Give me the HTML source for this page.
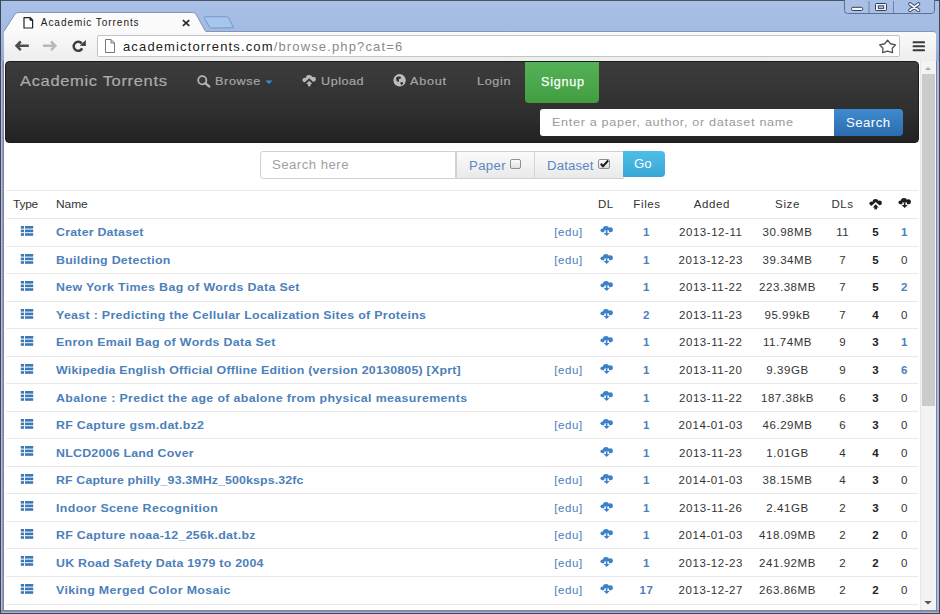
<!DOCTYPE html>
<html><head><meta charset="utf-8">
<style>
*{box-sizing:border-box;margin:0;padding:0}
html,body{width:940px;height:614px;overflow:hidden;font-family:"Liberation Sans",sans-serif;background:#fff}
.a{position:absolute}
.t{position:absolute;white-space:nowrap}
</style></head><body>

<div class="a" style="left:0;top:0;width:940px;height:614px;background:linear-gradient(#a9c1e7 0px,#a3bbe3 31px,#98aad6 61px,#8e9ac4 100%);"></div>
<div class="a" style="left:0;top:0;width:940px;height:1px;background:#4b5262"></div>
<div class="a" style="left:0;top:0;width:1px;height:614px;background:#3e4656"></div>
<div class="a" style="left:939px;top:0;width:1px;height:614px;background:#3e4656"></div>
<div class="a" style="left:0;top:613px;width:940px;height:1px;background:#3e4656"></div>
<svg class="a" style="left:840px;top:0" width="100" height="20">
<path d="M4.5 0 V10.5 Q4.5 13.5 7.5 13.5 H91.5 Q94.5 13.5 94.5 10.5 V0" fill="#a8bfe6" stroke="#5d6f93" stroke-width="1"/>
<line x1="29" y1="1" x2="29" y2="13" stroke="#6f82a8"/>
<line x1="53.5" y1="1" x2="53.5" y2="13" stroke="#6f82a8"/>
<rect x="11.5" y="7.3" width="11.2" height="3.2" rx="1.4" fill="#f6f8fc" stroke="#34405a" stroke-width="1"/>
<rect x="35.5" y="3.5" width="11" height="7" rx="0.8" fill="#eef2f8" stroke="#34405a" stroke-width="1"/>
<rect x="38.3" y="5.8" width="5.4" height="2.6" fill="#a8bfe6" stroke="#34405a" stroke-width="0.9"/>
<path d="M70 4 L78.5 10.2 M78.5 4 L70 10.2" stroke="#3a4660" stroke-width="3.6" stroke-linecap="round"/>
<path d="M70 4 L78.5 10.2 M78.5 4 L70 10.2" stroke="#f2f5fb" stroke-width="1.9" stroke-linecap="round"/>
</svg>
<div class="a" style="left:4px;top:31px;width:932px;height:30px;background:linear-gradient(#fafafa,#ededed);border-top:1px solid #8796b4;border-radius:0 3px 0 0"></div>
<svg class="a" style="left:0;top:0" width="260" height="40">
<path d="M233.5 27.8 L228.6 17.8 Q228 16.8 226.5 16.8 L205.5 16.8 Q203.6 16.8 204.4 18.2 L209.5 27 Q210.2 28 211.5 28 Z" fill="#a6c6f0" stroke="#7b94c2" stroke-width="1"/>
<path d="M3.5 32 L15 14 Q16.5 12.5 19 12.5 L192.5 12.5 Q194.8 12.5 196 14.2 L205.8 31.8" fill="#fbfbfb" stroke="#8494b3" stroke-width="1"/>
<rect x="4" y="31" width="201.5" height="3" fill="#f9f9f9"/>
<path d="M24 17.6 H30.2 L32.6 20 V28 H24 Z" fill="#fff" stroke="#222" stroke-width="1.2" stroke-linejoin="round"/><path d="M30 17.8 V20.2 H32.4" fill="#222" stroke="#222" stroke-width="1"/>
<path d="M182.9 20.2 L189.3 25.9 M189.3 20.2 L182.9 25.9" stroke="#2a2a2a" stroke-width="1.7"/>
</svg>
<div class="t" style="left:40.80px;top:18.14px;font-size:10px;line-height:10px;color:#1a1a1a;letter-spacing:0.950px;">Academic Torrents</div>
<svg class="a" style="left:0;top:30px" width="100" height="30">
<path d="M16.5 15.8 H28.8 M20.8 11.5 L16.5 15.8 L20.8 20.1" fill="none" stroke="#4e4e4e" stroke-width="2.5"/>
<path d="M43 15.8 H55.3 M51 11.5 L55.3 15.8 L51 20.1" fill="none" stroke="#b8b8b8" stroke-width="2.5"/>
<path d="M81.7 13.5 A4.5 4.5 0 1 0 82.2 18.4" fill="none" stroke="#3e3e3e" stroke-width="2.5"/>
<path d="M85.8 10 L85.8 16 L79.8 15.8 Z" fill="#3e3e3e"/>
</svg>
<div class="a" style="left:97px;top:35px;width:803px;height:22px;background:#fff;border:1px solid #c3c3c3;border-radius:2px"></div>
<svg class="a" style="left:100px;top:36px" width="20" height="20">
<path d="M5.5 3.5 H11 L14.5 7 V16.5 H5.5 Z M11 3.5 V7 H14.5" fill="#fff" stroke="#777" stroke-width="1"/>
</svg>
<div class="t" style="left:123.00px;top:40.30px;font-size:13px;line-height:13px;color:#222;letter-spacing:1.139px;">academictorrents.com<span style="color:#8a8a8a">/browse.php?cat=6</span></div>
<svg class="a" style="left:870px;top:33px" width="70" height="27">
<path d="M17.60 7.11 L20.48 10.75 L25.59 11.87 L22.26 15.24 L22.54 19.57 L17.60 18.02 L12.66 19.57 L12.94 15.24 L9.61 11.87 L14.72 10.75 Z" fill="#fff" stroke="#4e4e4e" stroke-width="1.3" stroke-linejoin="round"/>
<rect x="42.6" y="8.2" width="12.4" height="2.1" rx="0.9" fill="#3a3a3a"/>
<rect x="42.6" y="12.2" width="12.4" height="2.1" rx="0.9" fill="#3a3a3a"/>
<rect x="42.6" y="16.2" width="12.4" height="2.1" rx="0.9" fill="#3a3a3a"/>
</svg>
<div class="a" style="left:4px;top:61px;width:917px;height:549px;background:#fff"></div>
<div class="a" style="left:920px;top:61px;width:16px;height:549.5px;background:linear-gradient(90deg,#e6e6e6 0,#e6e6e6 1px,#f3f3f3 1px,#f3f3f3 14px,#f4f6ff 14px)"></div>
<div class="a" style="left:1px;top:61px;width:3px;height:552px;background:linear-gradient(90deg,#b3bbd9 0,#b3bbd9 1px,#949cc2 1px,#949cc2 2px,#7a82a8 2px)"></div>
<div class="a" style="left:936px;top:61px;width:3px;height:552px;background:linear-gradient(90deg,#7c83a5 0,#7c83a5 1px,#b0b8d8 1px)"></div>
<div class="a" style="left:1px;top:610px;width:938px;height:3px;background:linear-gradient(#80849f 0,#80849f 1px,#8a8fb0 1px,#8a8fb0 2px,#aab0d0 2px)"></div>
<div class="a" style="left:922px;top:74px;width:12.5px;height:332px;background:#cbcbcb"></div>
<svg class="a" style="left:921px;top:61px" width="14" height="549">
<path d="M4 9 L7 6 L10 9 Z" fill="#a8a8a8"/>
<path d="M3.3 540 L7 543.6 L10.7 540 Z" fill="#555"/>
</svg>
<div class="a" style="left:5px;top:60.5px;width:913.5px;height:82.2px;border-radius:4px;border:1px solid #1b1b1b;background:linear-gradient(#3c3c3c,#363636 30%,#2e2e2e 65%,#222222)"></div>
<div class="t" style="left:20.40px;top:73.10px;font-size:15px;line-height:15px;color:#ababab;letter-spacing:0.602px;transform:scaleX(1.1);transform-origin:0 0;-webkit-text-stroke:0.2px #ababab;">Academic Torrents</div>
<svg class="a" style="left:190px;top:68px" width="100" height="25">
<circle cx="12.3" cy="12.2" r="4.1" fill="none" stroke="#b4b4b4" stroke-width="1.8"/>
<path d="M15.2 15.1 L19.4 18.6" stroke="#b4b4b4" stroke-width="2.3" stroke-linecap="round"/>
<path d="M75.5 12.5 L82.5 12.5 L79 16 Z" fill="#3c8edb"/>
</svg>
<div class="t" style="left:214.50px;top:76.27px;font-size:11.5px;line-height:11.5px;color:#a6a6a6;letter-spacing:0.564px;transform:scaleX(1.1);transform-origin:0 0;-webkit-text-stroke:0.2px #a6a6a6;">Browse</div>
<svg class="a" style="left:302.00px;top:75.40px" width="16.2" height="13.0" viewBox="0 0 15 12"><g fill="#b8b8b8"><circle cx="2.5" cy="4.6" r="2.1"/><circle cx="6.5" cy="3.0" r="3.0"/><circle cx="10.6" cy="3.9" r="2.3"/><rect x="2.5" y="3.6" width="8" height="3.1"/></g><path d="M-1.5 10.6 L6.7 2.9 L14.9 10.6 Z" fill="#333"/><g fill="#b8b8b8"><path d="M3.7 8.4 L6.7 5.2 L9.7 8.4 Z"/><rect x="5.45" y="8" width="2.5" height="2.4"/></g></svg>
<div class="t" style="left:320.60px;top:76.27px;font-size:11.5px;line-height:11.5px;color:#a6a6a6;letter-spacing:0.455px;transform:scaleX(1.1);transform-origin:0 0;-webkit-text-stroke:0.2px #a6a6a6;">Upload</div>
<svg class="a" style="left:390px;top:72px" width="20" height="18">
<circle cx="9.6" cy="8.3" r="6.2" fill="#bcbcbc"/>
<path d="M6.2 5.6 Q7.6 4.2 9.8 4.6 Q11.8 5.2 10.9 6.6 Q9.2 6.6 8.8 7.8 Q9.6 9.4 8.2 10.1 Q6.6 9.6 6.3 8 Q6 6.6 6.2 5.6 Z" fill="#333"/>
<path d="M10.3 10.6 Q11.6 9.6 13.2 10.4 Q13.2 12 11.6 13 Q10.2 12.8 10.3 10.6 Z" fill="#333"/>
</svg>
<div class="t" style="left:410.20px;top:76.27px;font-size:11.5px;line-height:11.5px;color:#a6a6a6;letter-spacing:0.682px;transform:scaleX(1.1);transform-origin:0 0;-webkit-text-stroke:0.2px #a6a6a6;">About</div>
<div class="t" style="left:476.50px;top:76.27px;font-size:11.5px;line-height:11.5px;color:#a6a6a6;letter-spacing:0.568px;transform:scaleX(1.1);transform-origin:0 0;-webkit-text-stroke:0.2px #a6a6a6;">Login</div>
<div class="a" style="left:524.5px;top:61.5px;width:74.5px;height:41px;background:linear-gradient(#56b256,#419d41);border-radius:0 0 4px 4px"></div>
<div class="t" style="left:540.80px;top:76.24px;font-size:12px;line-height:12px;color:#f8fff8;letter-spacing:0.705px;transform:scaleX(1.05);transform-origin:0 0;-webkit-text-stroke:0.25px #f8fff8;">Signup</div>
<div class="a" style="left:540px;top:109px;width:294px;height:26.5px;background:#fff;border-radius:3px 0 0 3px"></div>
<div class="t" style="left:551.60px;top:117.27px;font-size:11.5px;line-height:11.5px;color:#9a9a9a;letter-spacing:0.600px;transform:scaleX(1.1);transform-origin:0 0;">Enter a paper, author, or dataset name</div>
<div class="a" style="left:833.5px;top:109px;width:69.5px;height:27px;background:linear-gradient(#3f8bd0,#2a6cae);border-radius:0 4px 4px 0"></div>
<div class="t" style="left:846.20px;top:116.84px;font-size:12px;line-height:12px;color:#fff;letter-spacing:0.418px;transform:scaleX(1.1);transform-origin:0 0;">Search</div>
<div class="a" style="left:259.5px;top:151px;width:196.5px;height:27.5px;background:#fff;border:1px solid #d2d2d2;border-radius:3px 0 0 3px"></div>
<div class="t" style="left:272.30px;top:159.34px;font-size:12px;line-height:12px;color:#a0a0a0;letter-spacing:0.418px;transform:scaleX(1.1);transform-origin:0 0;">Search here</div>
<div class="a" style="left:455.5px;top:151px;width:168px;height:28px;background:linear-gradient(#fbfbfb,#e9e9e9);border:1px solid #d0d0d0;border-right:none"></div>
<div class="a" style="left:534px;top:151px;width:1px;height:28px;background:#d4d4d4"></div>
<div class="t" style="left:468.70px;top:159.84px;font-size:12px;line-height:12px;color:#5a87c0;letter-spacing:0.318px;transform:scaleX(1.1);transform-origin:0 0;">Paper</div>
<div class="a" style="left:509.7px;top:159.3px;width:11px;height:9.8px;background:linear-gradient(#fcfcfc,#dedede);border:1px solid #8f8f8f;border-radius:2px"></div>
<div class="t" style="left:547.20px;top:159.84px;font-size:12px;line-height:12px;color:#5a87c0;letter-spacing:0.136px;transform:scaleX(1.1);transform-origin:0 0;">Dataset</div>
<div class="a" style="left:598.3px;top:159.3px;width:11.5px;height:9.8px;background:linear-gradient(#fcfcfc,#dedede);border:1px solid #8f8f8f;border-radius:2px"></div>
<svg class="a" style="left:598px;top:157px" width="13" height="13"><path d="M2.8 6.8 L5 9.2 L10.2 3.5" fill="none" stroke="#1e1e1e" stroke-width="2"/></svg>
<div class="a" style="left:623px;top:151px;width:42px;height:26px;background:linear-gradient(#4fbde6,#37a8d6);border-radius:0 4px 4px 0"></div>
<div class="t" style="left:633.80px;top:158.44px;font-size:12px;line-height:12px;color:#fff;letter-spacing:-0.091px;transform:scaleX(1.1);transform-origin:0 0;">Go</div>
<div class="a" style="left:6px;top:190px;width:912px;height:1px;background:#e8e8e8"></div>
<div class="t" style="left:13.30px;top:199.27px;font-size:11.5px;line-height:11.5px;color:#333;letter-spacing:-0.224px;transform:scaleX(1.04);transform-origin:0 0;">Type</div>
<div class="t" style="left:56.40px;top:199.27px;font-size:11.5px;line-height:11.5px;color:#333;letter-spacing:-0.064px;transform:scaleX(1.04);transform-origin:0 0;">Name</div>
<div class="t" style="left:565.90px;width:80px;text-align:center;top:199.27px;font-size:11.5px;line-height:11.5px;color:#333;letter-spacing:0.600px;">DL</div>
<div class="t" style="left:607.00px;width:80px;text-align:center;top:199.27px;font-size:11.5px;line-height:11.5px;color:#333;letter-spacing:0.600px;">Files</div>
<div class="t" style="left:671.80px;width:80px;text-align:center;top:199.27px;font-size:11.5px;line-height:11.5px;color:#333;letter-spacing:0.600px;">Added</div>
<div class="t" style="left:747.50px;width:80px;text-align:center;top:199.27px;font-size:11.5px;line-height:11.5px;color:#333;letter-spacing:0.600px;">Size</div>
<div class="t" style="left:802.60px;width:80px;text-align:center;top:199.27px;font-size:11.5px;line-height:11.5px;color:#333;letter-spacing:0.600px;">DLs</div>
<svg class="a" style="left:869.00px;top:198.60px" width="15.0" height="12.0" viewBox="0 0 15 12"><g fill="#1e1e1e"><circle cx="2.5" cy="4.6" r="2.1"/><circle cx="6.5" cy="3.0" r="3.0"/><circle cx="10.6" cy="3.9" r="2.3"/><rect x="2.5" y="3.6" width="8" height="3.1"/></g><path d="M-1.5 10.6 L6.7 2.9 L14.9 10.6 Z" fill="#fff"/><g fill="#1e1e1e"><path d="M3.7 8.4 L6.7 5.2 L9.7 8.4 Z"/><rect x="5.45" y="8" width="2.5" height="2.4"/></g></svg>
<svg class="a" style="left:897.60px;top:198.30px" width="15.0" height="12.0" viewBox="0 0 15 12"><g fill="#1e1e1e"><circle cx="2.4" cy="4.3" r="1.9"/><circle cx="6.0" cy="3.1" r="3.1"/><circle cx="10.4" cy="3.7" r="2.5"/><rect x="2.4" y="3.7" width="8" height="2.5"/></g><rect x="4.3" y="4.5" width="4.7" height="2.6" fill="#fff"/><g fill="#1e1e1e"><rect x="5.85" y="4.5" width="1.6" height="2.8"/><path d="M3.7 6.9 L9.6 6.9 L6.65 10.1 Z"/></g></svg>
<div class="a" style="left:6px;top:218.00px;width:912px;height:1px;background:#e8e8e8"></div>
<div class="a" style="left:6px;top:245.54px;width:912px;height:1px;background:#e8e8e8"></div>
<div class="a" style="left:6px;top:273.08px;width:912px;height:1px;background:#e8e8e8"></div>
<div class="a" style="left:6px;top:300.62px;width:912px;height:1px;background:#e8e8e8"></div>
<div class="a" style="left:6px;top:328.16px;width:912px;height:1px;background:#e8e8e8"></div>
<div class="a" style="left:6px;top:355.70px;width:912px;height:1px;background:#e8e8e8"></div>
<div class="a" style="left:6px;top:383.24px;width:912px;height:1px;background:#e8e8e8"></div>
<div class="a" style="left:6px;top:410.78px;width:912px;height:1px;background:#e8e8e8"></div>
<div class="a" style="left:6px;top:438.32px;width:912px;height:1px;background:#e8e8e8"></div>
<div class="a" style="left:6px;top:465.86px;width:912px;height:1px;background:#e8e8e8"></div>
<div class="a" style="left:6px;top:493.40px;width:912px;height:1px;background:#e8e8e8"></div>
<div class="a" style="left:6px;top:520.94px;width:912px;height:1px;background:#e8e8e8"></div>
<div class="a" style="left:6px;top:548.48px;width:912px;height:1px;background:#e8e8e8"></div>
<div class="a" style="left:6px;top:576.02px;width:912px;height:1px;background:#e8e8e8"></div>
<div class="a" style="left:6px;top:603.56px;width:912px;height:1px;background:#e8e8e8"></div>
<svg class="a" style="left:20px;top:226.00px" width="14" height="11">
<rect x="0.8" y="0" width="3.2" height="2.6" fill="#3a78b6"/><rect x="5" y="0" width="8.2" height="2.6" fill="#3a78b6"/>
<rect x="0.8" y="3.6" width="3.2" height="2.6" fill="#3a78b6"/><rect x="5" y="3.6" width="8.2" height="2.6" fill="#3a78b6"/>
<rect x="0.8" y="7.2" width="3.2" height="2.6" fill="#3a78b6"/><rect x="5" y="7.2" width="8.2" height="2.6" fill="#3a78b6"/>
</svg>
<div class="t" style="left:56.20px;top:227.27px;font-size:11.5px;line-height:11.5px;color:#4c80ba;letter-spacing:0.207px;font-weight:bold;transform:scaleX(1.076);transform-origin:0 0;">Crater Dataset</div>
<div class="t" style="left:538.50px;width:60px;text-align:center;top:227.27px;font-size:11.5px;line-height:11.5px;color:#4c80ba;letter-spacing:0.600px;">[edu]</div>
<svg class="a" style="left:600.00px;top:226.20px" width="15.0" height="12.0" viewBox="0 0 15 12"><g fill="#3d82c8"><circle cx="2.4" cy="4.3" r="1.9"/><circle cx="6.0" cy="3.1" r="3.1"/><circle cx="10.4" cy="3.7" r="2.5"/><rect x="2.4" y="3.7" width="8" height="2.5"/></g><rect x="4.3" y="4.5" width="4.7" height="2.6" fill="#fff"/><g fill="#3d82c8"><rect x="5.85" y="4.5" width="1.6" height="2.8"/><path d="M3.7 6.9 L9.6 6.9 L6.65 10.1 Z"/></g></svg>
<div class="t" style="left:626.60px;width:40px;text-align:center;top:227.27px;font-size:11.5px;line-height:11.5px;color:#4c80ba;letter-spacing:0.600px;font-weight:bold;">1</div>
<div class="t" style="left:665.77px;width:90px;text-align:center;top:227.27px;font-size:11.5px;line-height:11.5px;color:#333;letter-spacing:0.550px;">2013-12-11</div>
<div class="t" style="left:742.48px;width:90px;text-align:center;top:227.27px;font-size:11.5px;line-height:11.5px;color:#333;letter-spacing:0.550px;">30.98MB</div>
<div class="t" style="left:822.77px;width:40px;text-align:center;top:227.27px;font-size:11.5px;line-height:11.5px;color:#333;letter-spacing:0.550px;">11</div>
<div class="t" style="left:860.75px;width:30px;text-align:center;top:227.27px;font-size:11.5px;line-height:11.5px;color:#222;letter-spacing:0.500px;font-weight:bold;">5</div>
<div class="t" style="left:889.55px;width:30px;text-align:center;top:227.27px;font-size:11.5px;line-height:11.5px;color:#4c80ba;letter-spacing:0.500px;font-weight:bold;">1</div>
<svg class="a" style="left:20px;top:254.00px" width="14" height="11">
<rect x="0.8" y="0" width="3.2" height="2.6" fill="#3a78b6"/><rect x="5" y="0" width="8.2" height="2.6" fill="#3a78b6"/>
<rect x="0.8" y="3.6" width="3.2" height="2.6" fill="#3a78b6"/><rect x="5" y="3.6" width="8.2" height="2.6" fill="#3a78b6"/>
<rect x="0.8" y="7.2" width="3.2" height="2.6" fill="#3a78b6"/><rect x="5" y="7.2" width="8.2" height="2.6" fill="#3a78b6"/>
</svg>
<div class="t" style="left:56.20px;top:254.81px;font-size:11.5px;line-height:11.5px;color:#4c80ba;letter-spacing:0.280px;font-weight:bold;transform:scaleX(1.076);transform-origin:0 0;">Building Detection</div>
<div class="t" style="left:538.50px;width:60px;text-align:center;top:254.81px;font-size:11.5px;line-height:11.5px;color:#4c80ba;letter-spacing:0.600px;">[edu]</div>
<svg class="a" style="left:600.00px;top:253.74px" width="15.0" height="12.0" viewBox="0 0 15 12"><g fill="#3d82c8"><circle cx="2.4" cy="4.3" r="1.9"/><circle cx="6.0" cy="3.1" r="3.1"/><circle cx="10.4" cy="3.7" r="2.5"/><rect x="2.4" y="3.7" width="8" height="2.5"/></g><rect x="4.3" y="4.5" width="4.7" height="2.6" fill="#fff"/><g fill="#3d82c8"><rect x="5.85" y="4.5" width="1.6" height="2.8"/><path d="M3.7 6.9 L9.6 6.9 L6.65 10.1 Z"/></g></svg>
<div class="t" style="left:626.60px;width:40px;text-align:center;top:254.81px;font-size:11.5px;line-height:11.5px;color:#4c80ba;letter-spacing:0.600px;font-weight:bold;">1</div>
<div class="t" style="left:665.77px;width:90px;text-align:center;top:254.81px;font-size:11.5px;line-height:11.5px;color:#333;letter-spacing:0.550px;">2013-12-23</div>
<div class="t" style="left:742.48px;width:90px;text-align:center;top:254.81px;font-size:11.5px;line-height:11.5px;color:#333;letter-spacing:0.550px;">39.34MB</div>
<div class="t" style="left:822.77px;width:40px;text-align:center;top:254.81px;font-size:11.5px;line-height:11.5px;color:#333;letter-spacing:0.550px;">7</div>
<div class="t" style="left:860.75px;width:30px;text-align:center;top:254.81px;font-size:11.5px;line-height:11.5px;color:#222;letter-spacing:0.500px;font-weight:bold;">5</div>
<div class="t" style="left:889.55px;width:30px;text-align:center;top:254.81px;font-size:11.5px;line-height:11.5px;color:#333;letter-spacing:0.500px;">0</div>
<svg class="a" style="left:20px;top:281.00px" width="14" height="11">
<rect x="0.8" y="0" width="3.2" height="2.6" fill="#3a78b6"/><rect x="5" y="0" width="8.2" height="2.6" fill="#3a78b6"/>
<rect x="0.8" y="3.6" width="3.2" height="2.6" fill="#3a78b6"/><rect x="5" y="3.6" width="8.2" height="2.6" fill="#3a78b6"/>
<rect x="0.8" y="7.2" width="3.2" height="2.6" fill="#3a78b6"/><rect x="5" y="7.2" width="8.2" height="2.6" fill="#3a78b6"/>
</svg>
<div class="t" style="left:56.20px;top:282.35px;font-size:11.5px;line-height:11.5px;color:#4c80ba;letter-spacing:0.336px;font-weight:bold;transform:scaleX(1.076);transform-origin:0 0;">New York Times Bag of Words Data Set</div>
<svg class="a" style="left:600.00px;top:281.28px" width="15.0" height="12.0" viewBox="0 0 15 12"><g fill="#3d82c8"><circle cx="2.4" cy="4.3" r="1.9"/><circle cx="6.0" cy="3.1" r="3.1"/><circle cx="10.4" cy="3.7" r="2.5"/><rect x="2.4" y="3.7" width="8" height="2.5"/></g><rect x="4.3" y="4.5" width="4.7" height="2.6" fill="#fff"/><g fill="#3d82c8"><rect x="5.85" y="4.5" width="1.6" height="2.8"/><path d="M3.7 6.9 L9.6 6.9 L6.65 10.1 Z"/></g></svg>
<div class="t" style="left:626.60px;width:40px;text-align:center;top:282.35px;font-size:11.5px;line-height:11.5px;color:#4c80ba;letter-spacing:0.600px;font-weight:bold;">1</div>
<div class="t" style="left:665.77px;width:90px;text-align:center;top:282.35px;font-size:11.5px;line-height:11.5px;color:#333;letter-spacing:0.550px;">2013-11-22</div>
<div class="t" style="left:742.48px;width:90px;text-align:center;top:282.35px;font-size:11.5px;line-height:11.5px;color:#333;letter-spacing:0.550px;">223.38MB</div>
<div class="t" style="left:822.77px;width:40px;text-align:center;top:282.35px;font-size:11.5px;line-height:11.5px;color:#333;letter-spacing:0.550px;">7</div>
<div class="t" style="left:860.75px;width:30px;text-align:center;top:282.35px;font-size:11.5px;line-height:11.5px;color:#222;letter-spacing:0.500px;font-weight:bold;">5</div>
<div class="t" style="left:889.55px;width:30px;text-align:center;top:282.35px;font-size:11.5px;line-height:11.5px;color:#4c80ba;letter-spacing:0.500px;font-weight:bold;">2</div>
<svg class="a" style="left:20px;top:309.00px" width="14" height="11">
<rect x="0.8" y="0" width="3.2" height="2.6" fill="#3a78b6"/><rect x="5" y="0" width="8.2" height="2.6" fill="#3a78b6"/>
<rect x="0.8" y="3.6" width="3.2" height="2.6" fill="#3a78b6"/><rect x="5" y="3.6" width="8.2" height="2.6" fill="#3a78b6"/>
<rect x="0.8" y="7.2" width="3.2" height="2.6" fill="#3a78b6"/><rect x="5" y="7.2" width="8.2" height="2.6" fill="#3a78b6"/>
</svg>
<div class="t" style="left:56.20px;top:309.89px;font-size:11.5px;line-height:11.5px;color:#4c80ba;letter-spacing:0.294px;font-weight:bold;transform:scaleX(1.076);transform-origin:0 0;">Yeast : Predicting the Cellular Localization Sites of Proteins</div>
<svg class="a" style="left:600.00px;top:308.82px" width="15.0" height="12.0" viewBox="0 0 15 12"><g fill="#3d82c8"><circle cx="2.4" cy="4.3" r="1.9"/><circle cx="6.0" cy="3.1" r="3.1"/><circle cx="10.4" cy="3.7" r="2.5"/><rect x="2.4" y="3.7" width="8" height="2.5"/></g><rect x="4.3" y="4.5" width="4.7" height="2.6" fill="#fff"/><g fill="#3d82c8"><rect x="5.85" y="4.5" width="1.6" height="2.8"/><path d="M3.7 6.9 L9.6 6.9 L6.65 10.1 Z"/></g></svg>
<div class="t" style="left:626.60px;width:40px;text-align:center;top:309.89px;font-size:11.5px;line-height:11.5px;color:#4c80ba;letter-spacing:0.600px;font-weight:bold;">2</div>
<div class="t" style="left:665.77px;width:90px;text-align:center;top:309.89px;font-size:11.5px;line-height:11.5px;color:#333;letter-spacing:0.550px;">2013-11-23</div>
<div class="t" style="left:742.48px;width:90px;text-align:center;top:309.89px;font-size:11.5px;line-height:11.5px;color:#333;letter-spacing:0.550px;">95.99kB</div>
<div class="t" style="left:822.77px;width:40px;text-align:center;top:309.89px;font-size:11.5px;line-height:11.5px;color:#333;letter-spacing:0.550px;">7</div>
<div class="t" style="left:860.75px;width:30px;text-align:center;top:309.89px;font-size:11.5px;line-height:11.5px;color:#222;letter-spacing:0.500px;font-weight:bold;">4</div>
<div class="t" style="left:889.55px;width:30px;text-align:center;top:309.89px;font-size:11.5px;line-height:11.5px;color:#333;letter-spacing:0.500px;">0</div>
<svg class="a" style="left:20px;top:336.00px" width="14" height="11">
<rect x="0.8" y="0" width="3.2" height="2.6" fill="#3a78b6"/><rect x="5" y="0" width="8.2" height="2.6" fill="#3a78b6"/>
<rect x="0.8" y="3.6" width="3.2" height="2.6" fill="#3a78b6"/><rect x="5" y="3.6" width="8.2" height="2.6" fill="#3a78b6"/>
<rect x="0.8" y="7.2" width="3.2" height="2.6" fill="#3a78b6"/><rect x="5" y="7.2" width="8.2" height="2.6" fill="#3a78b6"/>
</svg>
<div class="t" style="left:56.20px;top:337.43px;font-size:11.5px;line-height:11.5px;color:#4c80ba;letter-spacing:0.307px;font-weight:bold;transform:scaleX(1.076);transform-origin:0 0;">Enron Email Bag of Words Data Set</div>
<svg class="a" style="left:600.00px;top:336.36px" width="15.0" height="12.0" viewBox="0 0 15 12"><g fill="#3d82c8"><circle cx="2.4" cy="4.3" r="1.9"/><circle cx="6.0" cy="3.1" r="3.1"/><circle cx="10.4" cy="3.7" r="2.5"/><rect x="2.4" y="3.7" width="8" height="2.5"/></g><rect x="4.3" y="4.5" width="4.7" height="2.6" fill="#fff"/><g fill="#3d82c8"><rect x="5.85" y="4.5" width="1.6" height="2.8"/><path d="M3.7 6.9 L9.6 6.9 L6.65 10.1 Z"/></g></svg>
<div class="t" style="left:626.60px;width:40px;text-align:center;top:337.43px;font-size:11.5px;line-height:11.5px;color:#4c80ba;letter-spacing:0.600px;font-weight:bold;">1</div>
<div class="t" style="left:665.77px;width:90px;text-align:center;top:337.43px;font-size:11.5px;line-height:11.5px;color:#333;letter-spacing:0.550px;">2013-11-22</div>
<div class="t" style="left:742.48px;width:90px;text-align:center;top:337.43px;font-size:11.5px;line-height:11.5px;color:#333;letter-spacing:0.550px;">11.74MB</div>
<div class="t" style="left:822.77px;width:40px;text-align:center;top:337.43px;font-size:11.5px;line-height:11.5px;color:#333;letter-spacing:0.550px;">9</div>
<div class="t" style="left:860.75px;width:30px;text-align:center;top:337.43px;font-size:11.5px;line-height:11.5px;color:#222;letter-spacing:0.500px;font-weight:bold;">3</div>
<div class="t" style="left:889.55px;width:30px;text-align:center;top:337.43px;font-size:11.5px;line-height:11.5px;color:#4c80ba;letter-spacing:0.500px;font-weight:bold;">1</div>
<svg class="a" style="left:20px;top:364.00px" width="14" height="11">
<rect x="0.8" y="0" width="3.2" height="2.6" fill="#3a78b6"/><rect x="5" y="0" width="8.2" height="2.6" fill="#3a78b6"/>
<rect x="0.8" y="3.6" width="3.2" height="2.6" fill="#3a78b6"/><rect x="5" y="3.6" width="8.2" height="2.6" fill="#3a78b6"/>
<rect x="0.8" y="7.2" width="3.2" height="2.6" fill="#3a78b6"/><rect x="5" y="7.2" width="8.2" height="2.6" fill="#3a78b6"/>
</svg>
<div class="t" style="left:56.20px;top:364.97px;font-size:11.5px;line-height:11.5px;color:#4c80ba;letter-spacing:0.207px;font-weight:bold;transform:scaleX(1.076);transform-origin:0 0;">Wikipedia English Official Offline Edition (version 20130805) [Xprt]</div>
<div class="t" style="left:538.50px;width:60px;text-align:center;top:364.97px;font-size:11.5px;line-height:11.5px;color:#4c80ba;letter-spacing:0.600px;">[edu]</div>
<svg class="a" style="left:600.00px;top:363.90px" width="15.0" height="12.0" viewBox="0 0 15 12"><g fill="#3d82c8"><circle cx="2.4" cy="4.3" r="1.9"/><circle cx="6.0" cy="3.1" r="3.1"/><circle cx="10.4" cy="3.7" r="2.5"/><rect x="2.4" y="3.7" width="8" height="2.5"/></g><rect x="4.3" y="4.5" width="4.7" height="2.6" fill="#fff"/><g fill="#3d82c8"><rect x="5.85" y="4.5" width="1.6" height="2.8"/><path d="M3.7 6.9 L9.6 6.9 L6.65 10.1 Z"/></g></svg>
<div class="t" style="left:626.60px;width:40px;text-align:center;top:364.97px;font-size:11.5px;line-height:11.5px;color:#4c80ba;letter-spacing:0.600px;font-weight:bold;">1</div>
<div class="t" style="left:665.77px;width:90px;text-align:center;top:364.97px;font-size:11.5px;line-height:11.5px;color:#333;letter-spacing:0.550px;">2013-11-20</div>
<div class="t" style="left:742.48px;width:90px;text-align:center;top:364.97px;font-size:11.5px;line-height:11.5px;color:#333;letter-spacing:0.550px;">9.39GB</div>
<div class="t" style="left:822.77px;width:40px;text-align:center;top:364.97px;font-size:11.5px;line-height:11.5px;color:#333;letter-spacing:0.550px;">9</div>
<div class="t" style="left:860.75px;width:30px;text-align:center;top:364.97px;font-size:11.5px;line-height:11.5px;color:#222;letter-spacing:0.500px;font-weight:bold;">3</div>
<div class="t" style="left:889.55px;width:30px;text-align:center;top:364.97px;font-size:11.5px;line-height:11.5px;color:#4c80ba;letter-spacing:0.500px;font-weight:bold;">6</div>
<svg class="a" style="left:20px;top:391.00px" width="14" height="11">
<rect x="0.8" y="0" width="3.2" height="2.6" fill="#3a78b6"/><rect x="5" y="0" width="8.2" height="2.6" fill="#3a78b6"/>
<rect x="0.8" y="3.6" width="3.2" height="2.6" fill="#3a78b6"/><rect x="5" y="3.6" width="8.2" height="2.6" fill="#3a78b6"/>
<rect x="0.8" y="7.2" width="3.2" height="2.6" fill="#3a78b6"/><rect x="5" y="7.2" width="8.2" height="2.6" fill="#3a78b6"/>
</svg>
<div class="t" style="left:56.20px;top:392.51px;font-size:11.5px;line-height:11.5px;color:#4c80ba;letter-spacing:0.338px;font-weight:bold;transform:scaleX(1.076);transform-origin:0 0;">Abalone : Predict the age of abalone from physical measurements</div>
<svg class="a" style="left:600.00px;top:391.44px" width="15.0" height="12.0" viewBox="0 0 15 12"><g fill="#3d82c8"><circle cx="2.4" cy="4.3" r="1.9"/><circle cx="6.0" cy="3.1" r="3.1"/><circle cx="10.4" cy="3.7" r="2.5"/><rect x="2.4" y="3.7" width="8" height="2.5"/></g><rect x="4.3" y="4.5" width="4.7" height="2.6" fill="#fff"/><g fill="#3d82c8"><rect x="5.85" y="4.5" width="1.6" height="2.8"/><path d="M3.7 6.9 L9.6 6.9 L6.65 10.1 Z"/></g></svg>
<div class="t" style="left:626.60px;width:40px;text-align:center;top:392.51px;font-size:11.5px;line-height:11.5px;color:#4c80ba;letter-spacing:0.600px;font-weight:bold;">1</div>
<div class="t" style="left:665.77px;width:90px;text-align:center;top:392.51px;font-size:11.5px;line-height:11.5px;color:#333;letter-spacing:0.550px;">2013-11-22</div>
<div class="t" style="left:742.48px;width:90px;text-align:center;top:392.51px;font-size:11.5px;line-height:11.5px;color:#333;letter-spacing:0.550px;">187.38kB</div>
<div class="t" style="left:822.77px;width:40px;text-align:center;top:392.51px;font-size:11.5px;line-height:11.5px;color:#333;letter-spacing:0.550px;">6</div>
<div class="t" style="left:860.75px;width:30px;text-align:center;top:392.51px;font-size:11.5px;line-height:11.5px;color:#222;letter-spacing:0.500px;font-weight:bold;">3</div>
<div class="t" style="left:889.55px;width:30px;text-align:center;top:392.51px;font-size:11.5px;line-height:11.5px;color:#333;letter-spacing:0.500px;">0</div>
<svg class="a" style="left:20px;top:419.00px" width="14" height="11">
<rect x="0.8" y="0" width="3.2" height="2.6" fill="#3a78b6"/><rect x="5" y="0" width="8.2" height="2.6" fill="#3a78b6"/>
<rect x="0.8" y="3.6" width="3.2" height="2.6" fill="#3a78b6"/><rect x="5" y="3.6" width="8.2" height="2.6" fill="#3a78b6"/>
<rect x="0.8" y="7.2" width="3.2" height="2.6" fill="#3a78b6"/><rect x="5" y="7.2" width="8.2" height="2.6" fill="#3a78b6"/>
</svg>
<div class="t" style="left:56.20px;top:420.05px;font-size:11.5px;line-height:11.5px;color:#4c80ba;letter-spacing:0.282px;font-weight:bold;transform:scaleX(1.076);transform-origin:0 0;">RF Capture gsm.dat.bz2</div>
<div class="t" style="left:538.50px;width:60px;text-align:center;top:420.05px;font-size:11.5px;line-height:11.5px;color:#4c80ba;letter-spacing:0.600px;">[edu]</div>
<svg class="a" style="left:600.00px;top:418.98px" width="15.0" height="12.0" viewBox="0 0 15 12"><g fill="#3d82c8"><circle cx="2.4" cy="4.3" r="1.9"/><circle cx="6.0" cy="3.1" r="3.1"/><circle cx="10.4" cy="3.7" r="2.5"/><rect x="2.4" y="3.7" width="8" height="2.5"/></g><rect x="4.3" y="4.5" width="4.7" height="2.6" fill="#fff"/><g fill="#3d82c8"><rect x="5.85" y="4.5" width="1.6" height="2.8"/><path d="M3.7 6.9 L9.6 6.9 L6.65 10.1 Z"/></g></svg>
<div class="t" style="left:626.60px;width:40px;text-align:center;top:420.05px;font-size:11.5px;line-height:11.5px;color:#4c80ba;letter-spacing:0.600px;font-weight:bold;">1</div>
<div class="t" style="left:665.77px;width:90px;text-align:center;top:420.05px;font-size:11.5px;line-height:11.5px;color:#333;letter-spacing:0.550px;">2014-01-03</div>
<div class="t" style="left:742.48px;width:90px;text-align:center;top:420.05px;font-size:11.5px;line-height:11.5px;color:#333;letter-spacing:0.550px;">46.29MB</div>
<div class="t" style="left:822.77px;width:40px;text-align:center;top:420.05px;font-size:11.5px;line-height:11.5px;color:#333;letter-spacing:0.550px;">6</div>
<div class="t" style="left:860.75px;width:30px;text-align:center;top:420.05px;font-size:11.5px;line-height:11.5px;color:#222;letter-spacing:0.500px;font-weight:bold;">3</div>
<div class="t" style="left:889.55px;width:30px;text-align:center;top:420.05px;font-size:11.5px;line-height:11.5px;color:#333;letter-spacing:0.500px;">0</div>
<svg class="a" style="left:20px;top:446.00px" width="14" height="11">
<rect x="0.8" y="0" width="3.2" height="2.6" fill="#3a78b6"/><rect x="5" y="0" width="8.2" height="2.6" fill="#3a78b6"/>
<rect x="0.8" y="3.6" width="3.2" height="2.6" fill="#3a78b6"/><rect x="5" y="3.6" width="8.2" height="2.6" fill="#3a78b6"/>
<rect x="0.8" y="7.2" width="3.2" height="2.6" fill="#3a78b6"/><rect x="5" y="7.2" width="8.2" height="2.6" fill="#3a78b6"/>
</svg>
<div class="t" style="left:56.20px;top:447.59px;font-size:11.5px;line-height:11.5px;color:#4c80ba;letter-spacing:0.216px;font-weight:bold;transform:scaleX(1.076);transform-origin:0 0;">NLCD2006 Land Cover</div>
<svg class="a" style="left:600.00px;top:446.52px" width="15.0" height="12.0" viewBox="0 0 15 12"><g fill="#3d82c8"><circle cx="2.4" cy="4.3" r="1.9"/><circle cx="6.0" cy="3.1" r="3.1"/><circle cx="10.4" cy="3.7" r="2.5"/><rect x="2.4" y="3.7" width="8" height="2.5"/></g><rect x="4.3" y="4.5" width="4.7" height="2.6" fill="#fff"/><g fill="#3d82c8"><rect x="5.85" y="4.5" width="1.6" height="2.8"/><path d="M3.7 6.9 L9.6 6.9 L6.65 10.1 Z"/></g></svg>
<div class="t" style="left:626.60px;width:40px;text-align:center;top:447.59px;font-size:11.5px;line-height:11.5px;color:#4c80ba;letter-spacing:0.600px;font-weight:bold;">1</div>
<div class="t" style="left:665.77px;width:90px;text-align:center;top:447.59px;font-size:11.5px;line-height:11.5px;color:#333;letter-spacing:0.550px;">2013-11-23</div>
<div class="t" style="left:742.48px;width:90px;text-align:center;top:447.59px;font-size:11.5px;line-height:11.5px;color:#333;letter-spacing:0.550px;">1.01GB</div>
<div class="t" style="left:822.77px;width:40px;text-align:center;top:447.59px;font-size:11.5px;line-height:11.5px;color:#333;letter-spacing:0.550px;">4</div>
<div class="t" style="left:860.75px;width:30px;text-align:center;top:447.59px;font-size:11.5px;line-height:11.5px;color:#222;letter-spacing:0.500px;font-weight:bold;">4</div>
<div class="t" style="left:889.55px;width:30px;text-align:center;top:447.59px;font-size:11.5px;line-height:11.5px;color:#333;letter-spacing:0.500px;">0</div>
<svg class="a" style="left:20px;top:474.00px" width="14" height="11">
<rect x="0.8" y="0" width="3.2" height="2.6" fill="#3a78b6"/><rect x="5" y="0" width="8.2" height="2.6" fill="#3a78b6"/>
<rect x="0.8" y="3.6" width="3.2" height="2.6" fill="#3a78b6"/><rect x="5" y="3.6" width="8.2" height="2.6" fill="#3a78b6"/>
<rect x="0.8" y="7.2" width="3.2" height="2.6" fill="#3a78b6"/><rect x="5" y="7.2" width="8.2" height="2.6" fill="#3a78b6"/>
</svg>
<div class="t" style="left:56.20px;top:475.13px;font-size:11.5px;line-height:11.5px;color:#4c80ba;letter-spacing:0.119px;font-weight:bold;transform:scaleX(1.076);transform-origin:0 0;">RF Capture philly_93.3MHz_500ksps.32fc</div>
<div class="t" style="left:538.50px;width:60px;text-align:center;top:475.13px;font-size:11.5px;line-height:11.5px;color:#4c80ba;letter-spacing:0.600px;">[edu]</div>
<svg class="a" style="left:600.00px;top:474.06px" width="15.0" height="12.0" viewBox="0 0 15 12"><g fill="#3d82c8"><circle cx="2.4" cy="4.3" r="1.9"/><circle cx="6.0" cy="3.1" r="3.1"/><circle cx="10.4" cy="3.7" r="2.5"/><rect x="2.4" y="3.7" width="8" height="2.5"/></g><rect x="4.3" y="4.5" width="4.7" height="2.6" fill="#fff"/><g fill="#3d82c8"><rect x="5.85" y="4.5" width="1.6" height="2.8"/><path d="M3.7 6.9 L9.6 6.9 L6.65 10.1 Z"/></g></svg>
<div class="t" style="left:626.60px;width:40px;text-align:center;top:475.13px;font-size:11.5px;line-height:11.5px;color:#4c80ba;letter-spacing:0.600px;font-weight:bold;">1</div>
<div class="t" style="left:665.77px;width:90px;text-align:center;top:475.13px;font-size:11.5px;line-height:11.5px;color:#333;letter-spacing:0.550px;">2014-01-03</div>
<div class="t" style="left:742.48px;width:90px;text-align:center;top:475.13px;font-size:11.5px;line-height:11.5px;color:#333;letter-spacing:0.550px;">38.15MB</div>
<div class="t" style="left:822.77px;width:40px;text-align:center;top:475.13px;font-size:11.5px;line-height:11.5px;color:#333;letter-spacing:0.550px;">4</div>
<div class="t" style="left:860.75px;width:30px;text-align:center;top:475.13px;font-size:11.5px;line-height:11.5px;color:#222;letter-spacing:0.500px;font-weight:bold;">3</div>
<div class="t" style="left:889.55px;width:30px;text-align:center;top:475.13px;font-size:11.5px;line-height:11.5px;color:#333;letter-spacing:0.500px;">0</div>
<svg class="a" style="left:20px;top:501.00px" width="14" height="11">
<rect x="0.8" y="0" width="3.2" height="2.6" fill="#3a78b6"/><rect x="5" y="0" width="8.2" height="2.6" fill="#3a78b6"/>
<rect x="0.8" y="3.6" width="3.2" height="2.6" fill="#3a78b6"/><rect x="5" y="3.6" width="8.2" height="2.6" fill="#3a78b6"/>
<rect x="0.8" y="7.2" width="3.2" height="2.6" fill="#3a78b6"/><rect x="5" y="7.2" width="8.2" height="2.6" fill="#3a78b6"/>
</svg>
<div class="t" style="left:56.20px;top:502.67px;font-size:11.5px;line-height:11.5px;color:#4c80ba;letter-spacing:0.340px;font-weight:bold;transform:scaleX(1.076);transform-origin:0 0;">Indoor Scene Recognition</div>
<div class="t" style="left:538.50px;width:60px;text-align:center;top:502.67px;font-size:11.5px;line-height:11.5px;color:#4c80ba;letter-spacing:0.600px;">[edu]</div>
<svg class="a" style="left:600.00px;top:501.60px" width="15.0" height="12.0" viewBox="0 0 15 12"><g fill="#3d82c8"><circle cx="2.4" cy="4.3" r="1.9"/><circle cx="6.0" cy="3.1" r="3.1"/><circle cx="10.4" cy="3.7" r="2.5"/><rect x="2.4" y="3.7" width="8" height="2.5"/></g><rect x="4.3" y="4.5" width="4.7" height="2.6" fill="#fff"/><g fill="#3d82c8"><rect x="5.85" y="4.5" width="1.6" height="2.8"/><path d="M3.7 6.9 L9.6 6.9 L6.65 10.1 Z"/></g></svg>
<div class="t" style="left:626.60px;width:40px;text-align:center;top:502.67px;font-size:11.5px;line-height:11.5px;color:#4c80ba;letter-spacing:0.600px;font-weight:bold;">1</div>
<div class="t" style="left:665.77px;width:90px;text-align:center;top:502.67px;font-size:11.5px;line-height:11.5px;color:#333;letter-spacing:0.550px;">2013-11-26</div>
<div class="t" style="left:742.48px;width:90px;text-align:center;top:502.67px;font-size:11.5px;line-height:11.5px;color:#333;letter-spacing:0.550px;">2.41GB</div>
<div class="t" style="left:822.77px;width:40px;text-align:center;top:502.67px;font-size:11.5px;line-height:11.5px;color:#333;letter-spacing:0.550px;">2</div>
<div class="t" style="left:860.75px;width:30px;text-align:center;top:502.67px;font-size:11.5px;line-height:11.5px;color:#222;letter-spacing:0.500px;font-weight:bold;">3</div>
<div class="t" style="left:889.55px;width:30px;text-align:center;top:502.67px;font-size:11.5px;line-height:11.5px;color:#333;letter-spacing:0.500px;">0</div>
<svg class="a" style="left:20px;top:529.00px" width="14" height="11">
<rect x="0.8" y="0" width="3.2" height="2.6" fill="#3a78b6"/><rect x="5" y="0" width="8.2" height="2.6" fill="#3a78b6"/>
<rect x="0.8" y="3.6" width="3.2" height="2.6" fill="#3a78b6"/><rect x="5" y="3.6" width="8.2" height="2.6" fill="#3a78b6"/>
<rect x="0.8" y="7.2" width="3.2" height="2.6" fill="#3a78b6"/><rect x="5" y="7.2" width="8.2" height="2.6" fill="#3a78b6"/>
</svg>
<div class="t" style="left:56.20px;top:530.21px;font-size:11.5px;line-height:11.5px;color:#4c80ba;letter-spacing:0.287px;font-weight:bold;transform:scaleX(1.076);transform-origin:0 0;">RF Capture noaa-12_256k.dat.bz</div>
<div class="t" style="left:538.50px;width:60px;text-align:center;top:530.21px;font-size:11.5px;line-height:11.5px;color:#4c80ba;letter-spacing:0.600px;">[edu]</div>
<svg class="a" style="left:600.00px;top:529.14px" width="15.0" height="12.0" viewBox="0 0 15 12"><g fill="#3d82c8"><circle cx="2.4" cy="4.3" r="1.9"/><circle cx="6.0" cy="3.1" r="3.1"/><circle cx="10.4" cy="3.7" r="2.5"/><rect x="2.4" y="3.7" width="8" height="2.5"/></g><rect x="4.3" y="4.5" width="4.7" height="2.6" fill="#fff"/><g fill="#3d82c8"><rect x="5.85" y="4.5" width="1.6" height="2.8"/><path d="M3.7 6.9 L9.6 6.9 L6.65 10.1 Z"/></g></svg>
<div class="t" style="left:626.60px;width:40px;text-align:center;top:530.21px;font-size:11.5px;line-height:11.5px;color:#4c80ba;letter-spacing:0.600px;font-weight:bold;">1</div>
<div class="t" style="left:665.77px;width:90px;text-align:center;top:530.21px;font-size:11.5px;line-height:11.5px;color:#333;letter-spacing:0.550px;">2014-01-03</div>
<div class="t" style="left:742.48px;width:90px;text-align:center;top:530.21px;font-size:11.5px;line-height:11.5px;color:#333;letter-spacing:0.550px;">418.09MB</div>
<div class="t" style="left:822.77px;width:40px;text-align:center;top:530.21px;font-size:11.5px;line-height:11.5px;color:#333;letter-spacing:0.550px;">2</div>
<div class="t" style="left:860.75px;width:30px;text-align:center;top:530.21px;font-size:11.5px;line-height:11.5px;color:#222;letter-spacing:0.500px;font-weight:bold;">2</div>
<div class="t" style="left:889.55px;width:30px;text-align:center;top:530.21px;font-size:11.5px;line-height:11.5px;color:#333;letter-spacing:0.500px;">0</div>
<svg class="a" style="left:20px;top:556.00px" width="14" height="11">
<rect x="0.8" y="0" width="3.2" height="2.6" fill="#3a78b6"/><rect x="5" y="0" width="8.2" height="2.6" fill="#3a78b6"/>
<rect x="0.8" y="3.6" width="3.2" height="2.6" fill="#3a78b6"/><rect x="5" y="3.6" width="8.2" height="2.6" fill="#3a78b6"/>
<rect x="0.8" y="7.2" width="3.2" height="2.6" fill="#3a78b6"/><rect x="5" y="7.2" width="8.2" height="2.6" fill="#3a78b6"/>
</svg>
<div class="t" style="left:56.20px;top:557.75px;font-size:11.5px;line-height:11.5px;color:#4c80ba;letter-spacing:0.218px;font-weight:bold;transform:scaleX(1.076);transform-origin:0 0;">UK Road Safety Data 1979 to 2004</div>
<div class="t" style="left:538.50px;width:60px;text-align:center;top:557.75px;font-size:11.5px;line-height:11.5px;color:#4c80ba;letter-spacing:0.600px;">[edu]</div>
<svg class="a" style="left:600.00px;top:556.68px" width="15.0" height="12.0" viewBox="0 0 15 12"><g fill="#3d82c8"><circle cx="2.4" cy="4.3" r="1.9"/><circle cx="6.0" cy="3.1" r="3.1"/><circle cx="10.4" cy="3.7" r="2.5"/><rect x="2.4" y="3.7" width="8" height="2.5"/></g><rect x="4.3" y="4.5" width="4.7" height="2.6" fill="#fff"/><g fill="#3d82c8"><rect x="5.85" y="4.5" width="1.6" height="2.8"/><path d="M3.7 6.9 L9.6 6.9 L6.65 10.1 Z"/></g></svg>
<div class="t" style="left:626.60px;width:40px;text-align:center;top:557.75px;font-size:11.5px;line-height:11.5px;color:#4c80ba;letter-spacing:0.600px;font-weight:bold;">1</div>
<div class="t" style="left:665.77px;width:90px;text-align:center;top:557.75px;font-size:11.5px;line-height:11.5px;color:#333;letter-spacing:0.550px;">2013-12-23</div>
<div class="t" style="left:742.48px;width:90px;text-align:center;top:557.75px;font-size:11.5px;line-height:11.5px;color:#333;letter-spacing:0.550px;">241.92MB</div>
<div class="t" style="left:822.77px;width:40px;text-align:center;top:557.75px;font-size:11.5px;line-height:11.5px;color:#333;letter-spacing:0.550px;">2</div>
<div class="t" style="left:860.75px;width:30px;text-align:center;top:557.75px;font-size:11.5px;line-height:11.5px;color:#222;letter-spacing:0.500px;font-weight:bold;">2</div>
<div class="t" style="left:889.55px;width:30px;text-align:center;top:557.75px;font-size:11.5px;line-height:11.5px;color:#333;letter-spacing:0.500px;">0</div>
<svg class="a" style="left:20px;top:584.00px" width="14" height="11">
<rect x="0.8" y="0" width="3.2" height="2.6" fill="#3a78b6"/><rect x="5" y="0" width="8.2" height="2.6" fill="#3a78b6"/>
<rect x="0.8" y="3.6" width="3.2" height="2.6" fill="#3a78b6"/><rect x="5" y="3.6" width="8.2" height="2.6" fill="#3a78b6"/>
<rect x="0.8" y="7.2" width="3.2" height="2.6" fill="#3a78b6"/><rect x="5" y="7.2" width="8.2" height="2.6" fill="#3a78b6"/>
</svg>
<div class="t" style="left:56.20px;top:585.29px;font-size:11.5px;line-height:11.5px;color:#4c80ba;letter-spacing:0.331px;font-weight:bold;transform:scaleX(1.076);transform-origin:0 0;">Viking Merged Color Mosaic</div>
<div class="t" style="left:538.50px;width:60px;text-align:center;top:585.29px;font-size:11.5px;line-height:11.5px;color:#4c80ba;letter-spacing:0.600px;">[edu]</div>
<svg class="a" style="left:600.00px;top:584.22px" width="15.0" height="12.0" viewBox="0 0 15 12"><g fill="#3d82c8"><circle cx="2.4" cy="4.3" r="1.9"/><circle cx="6.0" cy="3.1" r="3.1"/><circle cx="10.4" cy="3.7" r="2.5"/><rect x="2.4" y="3.7" width="8" height="2.5"/></g><rect x="4.3" y="4.5" width="4.7" height="2.6" fill="#fff"/><g fill="#3d82c8"><rect x="5.85" y="4.5" width="1.6" height="2.8"/><path d="M3.7 6.9 L9.6 6.9 L6.65 10.1 Z"/></g></svg>
<div class="t" style="left:626.60px;width:40px;text-align:center;top:585.29px;font-size:11.5px;line-height:11.5px;color:#4c80ba;letter-spacing:0.600px;font-weight:bold;">17</div>
<div class="t" style="left:665.77px;width:90px;text-align:center;top:585.29px;font-size:11.5px;line-height:11.5px;color:#333;letter-spacing:0.550px;">2013-12-27</div>
<div class="t" style="left:742.48px;width:90px;text-align:center;top:585.29px;font-size:11.5px;line-height:11.5px;color:#333;letter-spacing:0.550px;">263.86MB</div>
<div class="t" style="left:822.77px;width:40px;text-align:center;top:585.29px;font-size:11.5px;line-height:11.5px;color:#333;letter-spacing:0.550px;">2</div>
<div class="t" style="left:860.75px;width:30px;text-align:center;top:585.29px;font-size:11.5px;line-height:11.5px;color:#222;letter-spacing:0.500px;font-weight:bold;">2</div>
<div class="t" style="left:889.55px;width:30px;text-align:center;top:585.29px;font-size:11.5px;line-height:11.5px;color:#333;letter-spacing:0.500px;">0</div>
</body></html>
